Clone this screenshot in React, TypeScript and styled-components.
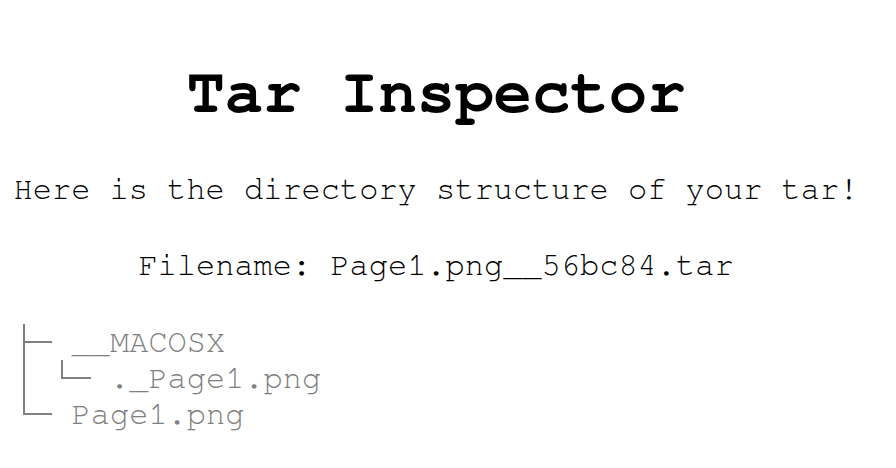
import React from 'react'
import styled, { createGlobalStyle } from 'styled-components'

const GlobalStyle = createGlobalStyle`
    html, body {
        margin: 0;
        padding: 0;
        background: #ffffff;
    }
    body {
        font-family: FreeMono, "Liberation Mono", monospace;
        color: #000000;
    }
`

const Page = styled.div`
    width: 872px;
    padding-top: 57px;
    display: flex;
    flex-direction: column;
`

const Title = styled.h1`
    margin: 0 0 42px 0;
    font-size: 64px;
    line-height: 72px;
    font-weight: bold;
    text-align: center;
`

const Line = styled.p<{ gap: number }>`
    margin: 0 0 ${(p) => p.gap}px 0;
    font-size: 32px;
    line-height: 36px;
    text-align: center;
`

const Tree = styled.div`
    padding-left: 14px;
    font-size: 32px;
    color: #808080;
`

const TreeRow = styled.div`
    display: flex;
    height: 36px;
    line-height: 36px;
    white-space: pre;
`

// one ancestor column: a straight line down when that ancestor has more siblings
const Guide = styled.span<{ open: boolean }>`
    position: relative;
    width: 2ch;
    flex: none;

    &::before {
        content: '';
        display: ${(p) => (p.open ? 'block' : 'none')};
        position: absolute;
        left: calc(0.5ch - 1px);
        top: 0;
        bottom: 0;
        border-left: 2px solid #808080;
    }
`

// the elbow or tee in front of an entry
const Branch = styled.span<{ last: boolean }>`
    position: relative;
    width: 3ch;
    flex: none;

    &::before {
        content: '';
        position: absolute;
        left: calc(0.5ch - 1px);
        top: 0;
        bottom: ${(p) => (p.last ? 'calc(50% - 1px)' : '0')};
        border-left: 2px solid #808080;
    }

    &::after {
        content: '';
        position: absolute;
        left: calc(0.5ch - 1px);
        width: calc(1.5ch + 1px);
        top: calc(50% - 1px);
        border-top: 2px solid #808080;
    }
`

interface Entry {
    name: string
    guides: boolean[]
    last: boolean
}

const entries: Entry[] = [
    { name: '__MACOSX', guides: [], last: false },
    { name: '._Page1.png', guides: [true], last: true },
    { name: 'Page1.png', guides: [], last: true },
]

export default function App() {
    return (
        <>
            <GlobalStyle />
            <Page>
                <Title>Tar Inspector</Title>
                <Line gap={40}>Here is the directory structure of your tar!</Line>
                <Line gap={41}>Filename: Page1.png__56bc84.tar</Line>
                <Tree>
                    {entries.map((e) => (
                        <TreeRow key={e.name + e.guides.length}>
                            {e.guides.map((g, i) => (
                                <Guide key={i} open={g} />
                            ))}
                            <Branch last={e.last} />
                            <span>{e.name}</span>
                        </TreeRow>
                    ))}
                </Tree>
            </Page>
        </>
    )
}
